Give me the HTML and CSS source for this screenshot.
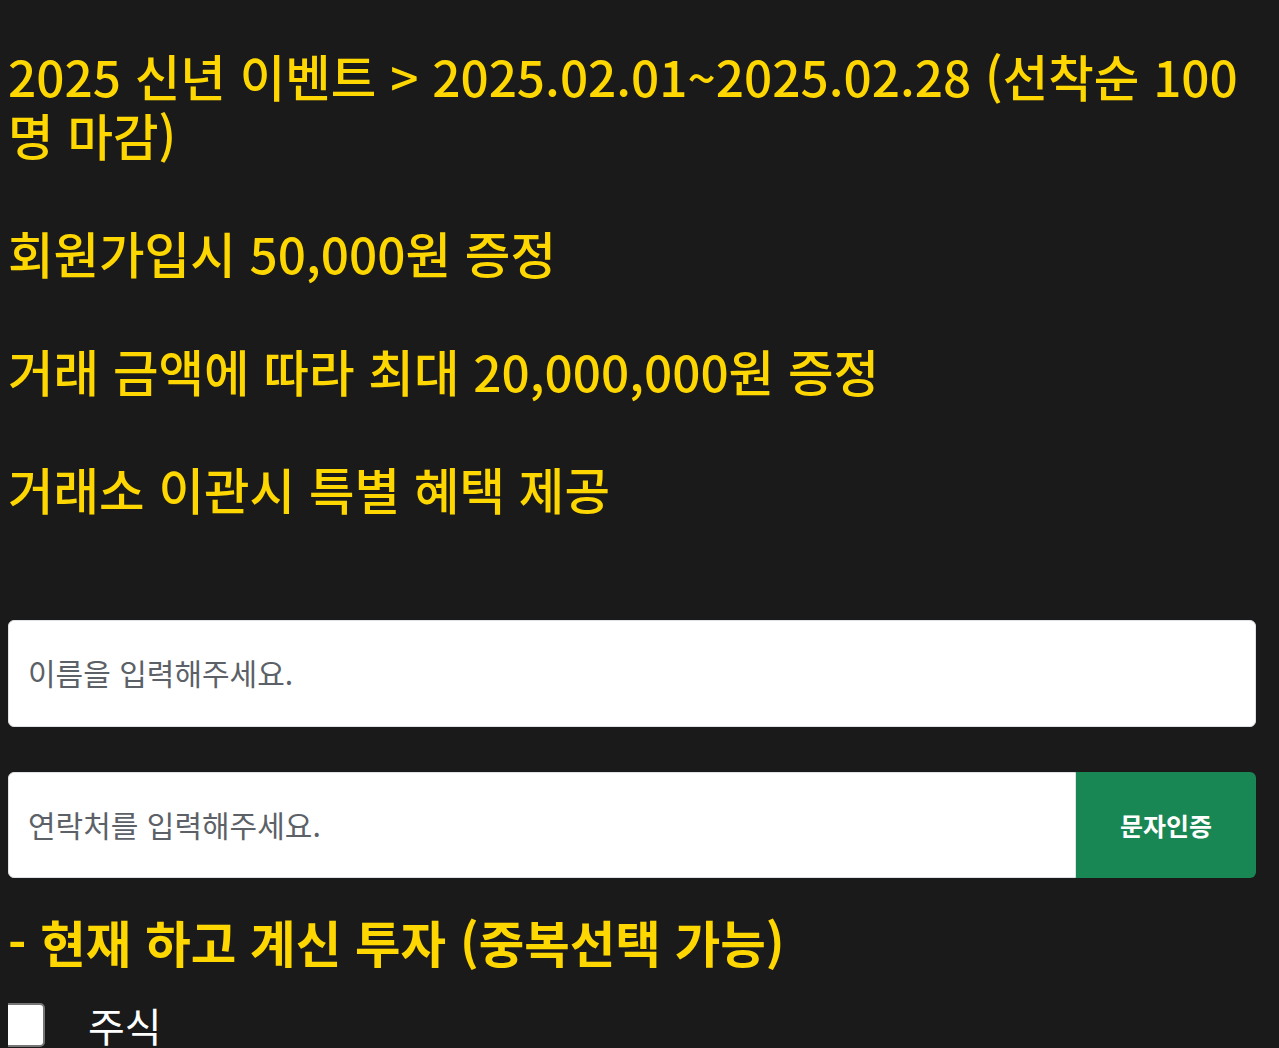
FILE: index.html
```html
<!DOCTYPE html>
<html lang="ko">
<head>
  <meta charset="UTF-8">
  <title>2025 신년 이벤트</title>
  <link rel="stylesheet" href="styles.css">
</head>
<body>
  <div class="page">
    <div class="event">
      <p>2025 신년 이벤트 &gt; 2025.02.01~2025.02.28 (선착순 100명 마감)</p>
      <p>회원가입시 50,000원 증정</p>
      <p>거래 금액에 따라 최대 20,000,000원 증정</p>
      <p>거래소 이관시 특별 혜택 제공</p>
    </div>

    <form class="apply">
      <input type="text" class="field" placeholder="이름을 입력해주세요.">
      <div class="phone-row">
        <input type="tel" class="field" placeholder="연락처를 입력해주세요.">
        <button type="button" class="verify">문자인증</button>
      </div>

      <h3 class="question">- 현재 하고 계신 투자 (중복선택 가능)</h3>
      <label class="option">
        <input type="checkbox" name="invest" value="stock">
        <span>주식</span>
      </label>
    </form>
  </div>
</body>
</html>
```

FILE: styles.css
```css
* {
  box-sizing: border-box;
}

body {
  margin: 8px;
  background: #1a1a1a;
  font-family: "Noto Sans CJK KR", "Noto Sans", sans-serif;
}

.page {
  width: 1248px;
}

.event {
  color: #ffd700;
  font-size: 49.5px;
  font-weight: 500;
  line-height: 59px;
  padding-top: 38px;
}

.event p {
  margin: 0 0 59px;
}

.event p:last-child {
  margin-bottom: 0;
}

.apply {
  margin-top: 102px;
}

.field {
  display: block;
  width: 100%;
  height: 107px;
  padding: 0 19px 3px;
  border: 1px solid #dee2e6;
  border-radius: 6px;
  background: #fff;
  font-family: inherit;
  font-size: 30px;
  color: #333;
}

.field::placeholder {
  color: #5c6168;
}

.phone-row {
  display: flex;
  margin-top: 45px;
}

.phone-row .field {
  flex: 1;
  height: 106px;
  border-radius: 6px 0 0 6px;
}

.verify {
  width: 180px;
  height: 106px;
  border: 0;
  border-radius: 0 6px 6px 0;
  background: #198754;
  color: #fff;
  font-family: inherit;
  font-size: 25px;
  font-weight: 700;
}

.question {
  margin: 32px 0 22px;
  color: #ffd700;
  font-size: 49.5px;
  font-weight: 700;
  line-height: 1.3;
}

.option {
  display: flex;
  align-items: center;
  gap: 43px;
  margin-left: -7px;
  color: #fff;
  font-size: 40px;
}

.option input {
  appearance: none;
  flex: none;
  width: 44px;
  height: 44px;
  margin: 0;
  border: 2px solid #767676;
  border-radius: 5px;
  background: #fff;
}
```
